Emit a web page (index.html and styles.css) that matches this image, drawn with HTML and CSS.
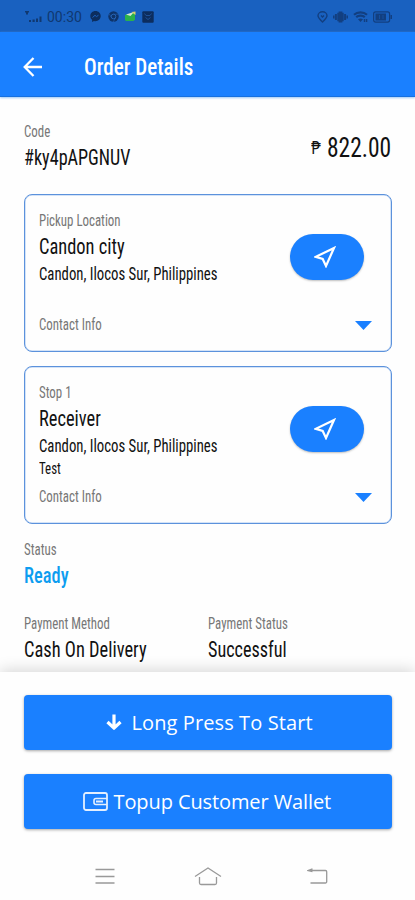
FILE: index.html
```
<!DOCTYPE html>
<html lang="en">
<head>
<meta charset="utf-8">
<title>Order Details</title>
<link rel="stylesheet" href="styles.css">
</head>
<body>
<div class="screen">
  <div class="statusbar">
    <div class="status-left">
      <svg width="21" height="14" viewBox="0 0 21 14" fill="#103870"><path d="M1 1h4v1.500H4v2H2v-2H1zM5 10h2v2H5zM8.500 9.500h2.200V12H8.500zM12 8.500h2V12h-2zM15.500 6.500h2V12h-2z"/></svg>
      <span class="clock">00:30</span>
      <svg class="messenger" width="11" height="11" viewBox="0 0 11 11"><path d="M5.500 0C2.400 0 .3 2.200.3 5c0 1.600.7 2.900 1.800 3.700V11l1.900-1c3.500.9 6.700-1.600 6.700-5C10.700 2.200 8.500 0 5.500 0z" fill="#0c2d5e"/><path d="M2.500 6.500 5 4.300l1.500 1.300 2-1.400" fill="none" stroke="#1961c0" stroke-width="1"/></svg>
      <svg class="chrome" width="11" height="11" viewBox="0 0 11 11"><circle cx="5.500" cy="5.500" r="5.200" fill="#0e3369"/><circle cx="5.500" cy="5.500" r="2.300" fill="none" stroke="#2563b5" stroke-width="1"/><path d="M5.500 3.200h5M3.500 6.700 1.200 2.800M7.500 6.700 5.200 11" stroke="#2563b5" stroke-width=".6"/></svg>
      <svg class="mail" width="11" height="11" viewBox="0 0 11 11"><path d="M0 4 10 1v7.500L8.500 10H1L0 9z" fill="#2bb24c"/><path d="M1 3.500 9 1l-3.500 4z" fill="#d6e9d2"/><path d="M6.500 1 10.500.5V4L9 3z" fill="#d8cf6a"/></svg>
      <svg class="gallery" width="12" height="12" viewBox="0 0 12 12"><rect x=".3" y=".3" width="11.400" height="11.400" rx="1" fill="#0c2d5e"/><path d="M2.500 2.500 4 4.500h4l1.500-2M3.500 6.500 6 8.500l2.500-2" fill="none" stroke="#1d5096" stroke-width="1"/></svg>
    </div>
    <div class="status-right">
      <svg width="11" height="12" viewBox="0 0 11 12" fill="none" stroke="#123f80" stroke-width="1.400"><path d="M5.500 11C3 8.700 1 6.800 1 4.800a4.500 4 0 0 1 9 0c0 2-2 3.900-4.500 6.200z"/><path d="M4 4.500 5.500 6 7 4.500"/></svg>
      <svg width="15" height="12" viewBox="0 0 15 12" fill="#123f80"><path d="M0 4.500h1.500v3H0zM1.900 3h2v6h-2zM4.300 1.800h1.300V.5h3.800v1.300h1.300v8.400H9.400v1.300H5.600v-1.300H4.300zM11.100 3h2v6h-2zM13.500 4.500H15v3h-1.500z"/></svg>
      <svg width="15" height="12" viewBox="0 0 15 12"><path d="M1 3.800c3.500-3.200 9.500-3.200 13 0M3.200 6.200c2.300-2 6.300-2 8.600 0" fill="none" stroke="#123f80" stroke-width="2.200"/><path d="M5 8.300c1.500-1.200 3.500-1.200 5 0L7.500 11zM10.800 8h1.500v3h-1.500zM13 8h1.300v3H13z" fill="#123f80"/></svg>
      <svg width="20" height="12" viewBox="0 0 20 12"><rect x=".6" y=".9" width="16" height="10.200" rx="2" fill="none" stroke="#123f80" stroke-width="1.200"/><path d="M2.500 2.500h10.500v7H2.500z" fill="#123f80"/><path d="M6.500 4v4M10 4v4" stroke="#1961c0" stroke-width=".5"/><path d="M17.500 4h1.500v4h-1.500z" fill="#123f80"/></svg>
    </div>
  </div>

  <header class="appbar">
    <svg width="20" height="20" viewBox="0 0 20 20" fill="none" stroke="#fff" stroke-width="2.300"><path d="M19 10H1.800M10.500 1 1.700 10l8.800 9"/></svg>
    <h1 class="title"><span class="squeeze s85">Order Details</span></h1>
  </header>

  <main class="content">
    <div class="summary">
      <div>
        <p class="label"><span class="squeeze s80">Code</span></p>
        <p class="value"><span class="squeeze s82">#ky4pAPGNUV</span></p>
      </div>
      <p class="price"><span class="peso">₱</span><span class="amount">822.00</span></p>
    </div>

    <section class="card">
      <div class="card-top">
        <div class="place">
          <p class="label"><span class="squeeze s80">Pickup Location</span></p>
          <p class="name"><span class="squeeze s84">Candon city</span></p>
          <p class="address"><span class="squeeze s81">Candon, Ilocos Sur, Philippines</span></p>
        </div>
        <div class="pill"><svg width="22" height="22" viewBox="0 0 22 22" fill="none" stroke="#fff" stroke-width="2.200"><path d="M20 2 1.800 10.800l6.900 2.200L12 20z"/></svg></div>
      </div>
      <div class="contact">
        <p class="label"><span class="squeeze s80">Contact Info</span></p>
        <svg width="17" height="9" viewBox="0 0 17 9" fill="#1a80ff"><path d="M0 0h17L8.500 9z"/></svg>
      </div>
    </section>

    <section class="card">
      <div class="card-top">
        <div class="place">
          <p class="label"><span class="squeeze s80">Stop 1</span></p>
          <p class="name"><span class="squeeze s84">Receiver</span></p>
          <p class="address"><span class="squeeze s81">Candon, Ilocos Sur, Philippines</span></p>
          <p class="note"><span class="squeeze s76">Test</span></p>
        </div>
        <div class="pill"><svg width="22" height="22" viewBox="0 0 22 22" fill="none" stroke="#fff" stroke-width="2.200"><path d="M20 2 1.800 10.800l6.900 2.200L12 20z"/></svg></div>
      </div>
      <div class="contact">
        <p class="label"><span class="squeeze s80">Contact Info</span></p>
        <svg width="17" height="9" viewBox="0 0 17 9" fill="#1a80ff"><path d="M0 0h17L8.500 9z"/></svg>
      </div>
    </section>

    <div class="order-status">
      <p class="label"><span class="squeeze s80">Status</span></p>
      <p class="value ready"><span class="squeeze s84">Ready</span></p>
    </div>

    <div class="payment">
      <div>
        <p class="label"><span class="squeeze s80">Payment Method</span></p>
        <p class="value"><span class="squeeze s84">Cash On Delivery</span></p>
      </div>
      <div>
        <p class="label"><span class="squeeze s80">Payment Status</span></p>
        <p class="value"><span class="squeeze s82">Successful</span></p>
      </div>
    </div>
  </main>

  <footer class="sheet">
    <div class="button">
      <svg class="down" width="16" height="17" viewBox="0 0 16 17" fill="none" stroke="#fff" stroke-width="3.200"><path d="M8 .5V14M1.500 8 8 14.200 14.500 8" stroke-linejoin="round"/></svg>
      <span class="start">Long Press To Start</span>
    </div>
    <div class="button">
      <svg class="wallet" width="25" height="19" viewBox="0 0 25 19" fill="none" stroke="#e3efff"><rect x="1" y="1" width="23" height="17" rx="2" stroke-width="1.800"/><path d="M24 6.500H13a2 2 0 0 0-2 2v2a2 2 0 0 0 2 2h11" stroke-width="1.600"/><path d="M13 9.500h7" stroke-width="2"/></svg>
      <span class="topup">Topup Customer Wallet</span>
    </div>
    <nav class="nav">
      <svg width="20" height="17" viewBox="0 0 20 17" stroke="#999" stroke-width="1.300"><path d="M.5 1.500h19M.5 8.500h19M.5 15h19"/></svg>
      <svg width="28" height="19" viewBox="0 0 28 19" fill="none" stroke="#999" stroke-width="1.300"><path d="M1 9.500 14 1l13 8.500M5.500 10v6a1.500 1.500 0 0 0 1.500 1.500h14a1.500 1.500 0 0 0 1.500-1.500v-6"/></svg>
      <svg width="21" height="17" viewBox="0 0 21 17" fill="none" stroke="#999" stroke-width="1.300"><path d="M1 2.500h17.500a1.200 1.200 0 0 1 1.200 1.200v10.100a1.200 1.200 0 0 1-1.200 1.200H3.500M5.500.8 1 2.500l4.500 1"/></svg>
    </nav>
  </footer>
</div>
</body>
</html>
```
FILE: styles.css
```
* { box-sizing: border-box; }
body {
  margin: 0;
  background: #fefefe;
  color: #111;
  font-family: Roboto, "Liberation Sans", sans-serif;
}
p, h1 { margin: 0; white-space: nowrap; }
.screen { width: 415px; height: 900px; display: flex; flex-direction: column; overflow: hidden; }

.squeeze { display: inline-block; font-stretch: 75%; transform-origin: left center; }
.s76 { transform: scaleX(.76); }
.s80 { transform: scaleX(.805); }
.s81 { transform: scaleX(.82); }
.s82 { transform: scaleX(.825); }
.s84 { transform: scaleX(.838); }
.s85 { transform: scaleX(.86); }

.statusbar {
  height: 32px;
  flex: none;
  background: #1961c0;
  display: flex;
  justify-content: space-between;
  padding: 1px 22px 0 24px;
}
.status-left, .status-right { display: flex; align-items: center; }
.status-right { gap: 5px; }
.clock { font-size: 14px; color: #103870; margin-left: 2px; }
.messenger { margin-left: 8px; }
.chrome { margin-left: 7px; }
.mail { margin-left: 6px; }
.gallery { margin-left: 6px; }

.appbar {
  height: 65px;
  flex: none;
  background: #1a80ff;
  border-bottom: 1px solid #1670df;
  box-shadow: 0 1px 2px #9cc8f5;
  display: flex;
  align-items: center;
  padding: 5px 0 0 23px;
  gap: 41px;
  color: #fff;
}
.title { font-size: 24.5px; font-weight: 500; line-height: 32px; }

.content { height: 575px; flex: none; padding: 24px 23px 0 23.5px; }
.label { font-size: 16px; line-height: 22px; color: #777; }
.value { font-size: 22px; line-height: 29px; }
.summary { display: flex; justify-content: space-between; height: 51px; margin-bottom: 22px; }
.price { display: flex; font-size: 27px; line-height: 54px; font-stretch: 75%; }
.peso { font-size: 18px; width: 16px; transform: scaleX(.85); transform-origin: left; }
.amount { width: 65px; transform: scaleX(.87); transform-origin: left; }

.card {
  height: 158px;
  border: 1px solid #5c92dc;
  border-radius: 8px;
  box-shadow: inset 0 0 0 .5px #a9c8f0;
  padding: 15px 20px 0 14px;
  margin-bottom: 14px;
}
.card-top { display: flex; justify-content: space-between; height: 104px; }
.place { width: 200px; }
.name { font-size: 22px; line-height: 29px; }
.address { font-size: 18px; line-height: 26px; }
.note { font-size: 17px; line-height: 18px; }
.pill {
  width: 74px;
  height: 46px;
  margin: 24px 7px 0 0;
  border-radius: 23px;
  background: #1a80ff;
  box-shadow: 0 1px 2px rgba(0, 0, 0, .25);
  display: flex;
  align-items: center;
  justify-content: center;
}
.pill svg { margin-right: 5px; }
.contact { display: flex; justify-content: space-between; align-items: center; margin-right: -1px; }

.order-status { margin-top: 15px; }
.ready { color: #0c9df0; font-weight: 500; }
.payment { display: grid; grid-template-columns: 184px 1fr; margin-top: 23px; }

.sheet {
  position: relative;
  flex: 1;
  background: #fefefe;
  box-shadow: 0 -2px 14px rgba(0, 0, 0, .16);
  padding: 23px 23px 0 23.5px;
}
.button {
  height: 55px;
  margin-bottom: 24px;
  border-radius: 4px;
  background: #1a80ff;
  box-shadow: 0 1px 3px rgba(0, 0, 0, .35);
  color: #fff;
  display: flex;
  align-items: center;
  font-family: "Open Sans", Roboto, sans-serif;
  font-size: 20px;
  line-height: 26px;
  white-space: nowrap;
}
.down { margin-left: 82px; margin-right: 10px; }
.wallet { margin-left: 59px; margin-right: 6px; }
.start { letter-spacing: .1px; }
.topup { letter-spacing: -.1px; }
.nav { display: flex; align-items: center; padding-left: 71px; height: 46px; }
.nav svg:nth-child(2) { margin-left: 79px; }
.nav svg:nth-child(3) { margin-left: 85px; }
```
